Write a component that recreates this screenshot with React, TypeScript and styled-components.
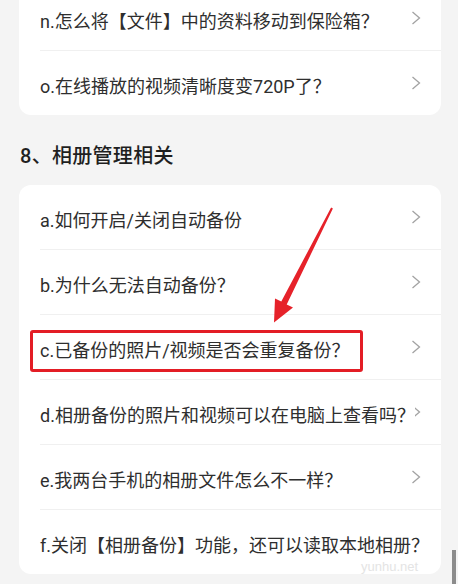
import styled, { createGlobalStyle } from "styled-components";

const GlobalStyle = createGlobalStyle`
  html, body {
    margin: 0;
    padding: 0;
    background: #f4f4f4;
    overflow: hidden;
  }
  body {
    font-family: Roboto, "Noto Sans CJK SC", sans-serif;
  }
`;

const firstGroup = [
  "n.怎么将【文件】中的资料移动到保险箱？",
  "o.在线播放的视频清晰度变720P了？",
];

const albumGroup = [
  "a.如何开启/关闭自动备份",
  "b.为什么无法自动备份？",
  "c.已备份的照片/视频是否会重复备份？",
  "d.相册备份的照片和视频可以在电脑上查看吗？",
  "e.我两台手机的相册文件怎么不一样？",
  "f.关闭【相册备份】功能，还可以读取本地相册？",
];

export default function App() {
  return (
    <>
      <GlobalStyle />
      <Page>
        <Card $scrolled>
          {firstGroup.map((q) => (
            <QuestionRow key={q} text={q} />
          ))}
        </Card>

        <SectionTitle>8、相册管理相关</SectionTitle>

        <Card>
          {albumGroup.map((q, i) => (
            <QuestionRow key={q} text={q} highlight={i === 2} watermark={i === 5} />
          ))}
        </Card>

        <Arrow viewBox="0 0 458 584" width="458" height="584">
          <polygon
            points="331.1,207.5 332.9,208.5 286.7,304.4 293,307.6 274,322.5 275,298.4 281.3,301.6"
            fill="#e6222a"
          />
        </Arrow>
        <ScrollThumb />
      </Page>
    </>
  );
}

interface QuestionRowProps {
  text: string;
  highlight?: boolean;
  watermark?: boolean;
}

const QuestionRow = ({ text, highlight, watermark }: QuestionRowProps) => (
  <Row>
    <RowText>
      <Label>{text}</Label>
    </RowText>
    <Chevron viewBox="0 0 10 14" width="10" height="14">
      <polyline points="1.5,1 8.5,7 1.5,13" fill="none" stroke="#a3a3a3" strokeWidth="1.3" />
    </Chevron>
    {highlight && <HighlightBox />}
    {watermark && <Watermark>yunhu.net</Watermark>}
  </Row>
);

const Page = styled.div`
  position: relative;
  width: 458px;
  height: 584px;
  overflow: hidden;
  padding: 0 17px 0 19px;
  box-sizing: border-box;
`;

const Card = styled.div<{ $scrolled?: boolean }>`
  background: #ffffff;
  border-radius: 12px;
  margin-top: ${(p) => (p.$scrolled ? "-14px" : "0")};
  overflow: hidden;
`;

const SectionTitle = styled.h2`
  margin: 27px 0 15px 1px;
  font-size: 20px;
  line-height: 28px;
  font-weight: 500;
  color: #1f1f1f;
  letter-spacing: 0.3px;
`;

const Row = styled.div`
  position: relative;
  height: 64px;
  margin-left: 21px;
  padding: 3px 20px 0 0;
  box-sizing: border-box;
  display: flex;
  align-items: center;

  & + & {
    border-top: 1px solid #f0f0f0;
    height: 65px;
  }
`;

const RowText = styled.div`
  flex: 1;
  min-width: 0;
  white-space: nowrap;
`;

const Label = styled.span`
  position: relative;
  z-index: 1;
  background: #ffffff;
  font-size: 18px;
  color: #2e2e2e;
`;

const Chevron = styled.svg`
  flex-shrink: 0;
  margin-top: -4px;
`;

const HighlightBox = styled.div`
  position: absolute;
  left: -10px;
  top: 15px;
  width: 333px;
  height: 42px;
  border: 3px solid #e31d25;
  border-radius: 3px;
  box-sizing: border-box;
  z-index: 2;
`;

const Watermark = styled.span`
  position: absolute;
  left: 321px;
  top: 49px;
  z-index: 2;
  font-family: "Liberation Sans", Arial, sans-serif;
  font-size: 13px;
  color: #e4e4e4;
`;

const Arrow = styled.svg`
  position: absolute;
  left: 0;
  top: 0;
  z-index: 3;
  pointer-events: none;
`;

const ScrollThumb = styled.div`
  position: absolute;
  right: 2px;
  top: 550px;
  width: 4px;
  height: 34px;
  background: #8c8c8c;
`;
